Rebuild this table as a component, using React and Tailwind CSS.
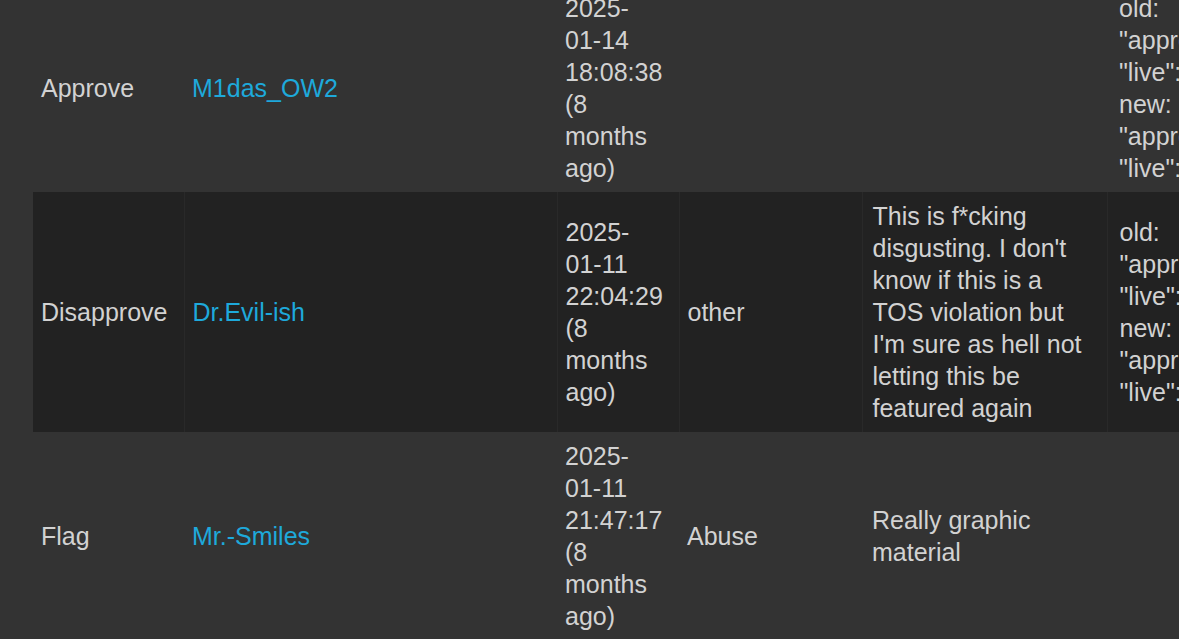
const rows = [
  {
    action: "Approve",
    user: "M1das_OW2",
    date: ["2025-", "01-14", "18:08:38", "(8", "months", "ago)"],
    reason: [],
    comment: [],
    diff: ["old:", '"approved": false,', '"live": false', "new:", '"approved": true,', '"live": true'],
    dark: false,
  },
  {
    action: "Disapprove",
    user: "Dr.Evil-ish",
    date: ["2025-", "01-11", "22:04:29", "(8", "months", "ago)"],
    reason: ["other"],
    comment: [
      "This is f*cking",
      "disgusting. I don't",
      "know if this is a",
      "TOS violation but",
      "I'm sure as hell not",
      "letting this be",
      "featured again",
    ],
    diff: ["old:", '"approved": true,', '"live": true', "new:", '"approved": false,', '"live": false'],
    dark: true,
  },
  {
    action: "Flag",
    user: "Mr.-Smiles",
    date: ["2025-", "01-11", "21:47:17", "(8", "months", "ago)"],
    reason: ["Abuse"],
    comment: ["Really graphic", "material"],
    diff: [],
    dark: false,
  },
];

function Lines({ lines }) {
  return lines.map((line, i) => (
    <div key={i} className="whitespace-nowrap">
      {line}
    </div>
  ));
}

export default function App() {
  return (
    <div
      className="w-full h-[639px] overflow-hidden bg-[#333333] text-[#d2d2d2] text-[25px] leading-[32px]"
      style={{ fontFamily: '"Liberation Sans", Arial, sans-serif' }}
    >
      <table className="-mt-[16px] ml-[33px] table-fixed border-collapse w-[1334px]">
        <colgroup>
          <col className="w-[151px]" />
          <col className="w-[373px]" />
          <col className="w-[122px]" />
          <col className="w-[183px]" />
          <col className="w-[245px]" />
          <col className="w-[260px]" />
        </colgroup>
        <tbody>
          {rows.map((row) => {
            const cell = row.dark
              ? "align-middle py-2 px-2 border-l border-[#292929] first:border-l-0"
              : "align-middle py-2 px-2";
            return (
              <tr key={row.user} className={row.dark ? "bg-[#222222]" : ""}>
                <td className={cell}>{row.action}</td>
                <td className={cell}>
                  <a href="#" className="text-[#1ea9db]">
                    {row.user}
                  </a>
                </td>
                <td className={cell}>
                  <Lines lines={row.date} />
                </td>
                <td className={cell}>
                  <Lines lines={row.reason} />
                </td>
                <td className={cell + " pl-[10px]"}>
                  <Lines lines={row.comment} />
                </td>
                <td className={cell + " pl-[12px]"}>
                  <Lines lines={row.diff} />
                </td>
              </tr>
            );
          })}
        </tbody>
      </table>
    </div>
  );
}
